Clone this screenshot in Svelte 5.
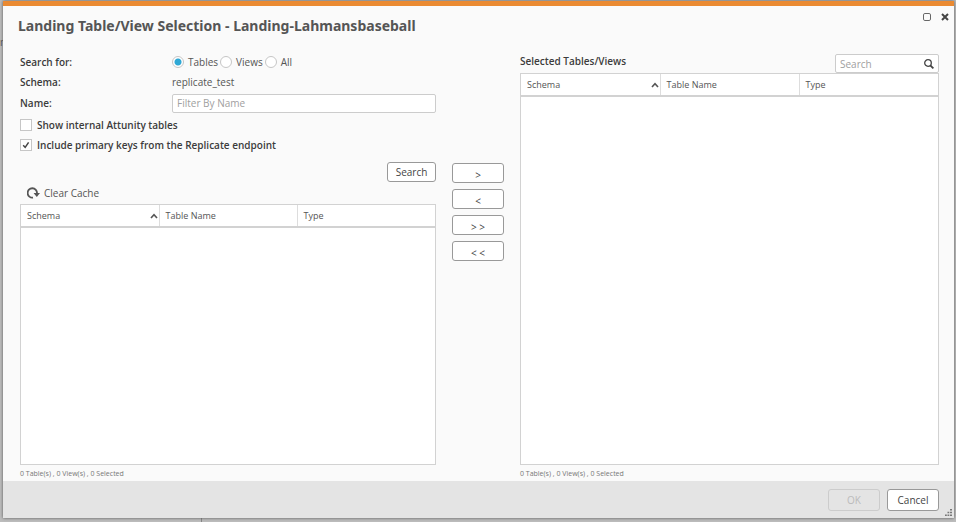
<script>
  let searchFor = $state('Tables');
  let nameFilter = $state('');
  let selectedFilter = $state('');
  let showInternal = $state(false);
  let includeKeys = $state(true);
  const kinds = ['Tables', 'Views', 'All'];
  const moves = [
    { text: '>', label: 'Add' },
    { text: '<', label: 'Remove' },
    { text: '> >', label: 'Add all' },
    { text: '< <', label: 'Remove all' }
  ];
</script>

{#snippet listing(label)}
  <div class="listing">
    <table aria-label={label}>
      <thead>
        <tr>
          <th scope="col" aria-sort="ascending">
            <div class="th">
              Schema
              <svg width="8" height="6" viewBox="0 0 8 6" aria-hidden="true"><path d="M1 5 4 1.6 7 5" fill="none" stroke="#555" stroke-width="1.6" /></svg>
            </div>
          </th>
          <th scope="col"><div class="th">Table Name</div></th>
          <th scope="col"><div class="th">Type</div></th>
        </tr>
      </thead>
      <tbody></tbody>
    </table>
  </div>
  <p class="count">0 Table(s) , 0 View(s) , 0 Selected</p>
{/snippet}

<div class="page">
  <span class="behind" aria-hidden="true">m</span>
  <i class="divider"></i>
  <div class="dialog" role="dialog" aria-labelledby="title">
    <header>
      <h1 id="title">Landing Table/View Selection - Landing-Lahmansbaseball</h1>
      <div class="window">
        <button class="icon" aria-label="Maximize">
          <svg width="8" height="8" viewBox="0 0 8 8"><rect x=".5" y=".5" width="7" height="7" rx="1.4" fill="none" stroke="#666" /></svg>
        </button>
        <button class="icon" aria-label="Close">
          <svg width="8" height="8" viewBox="0 0 8 8"><path d="M1 1 7 7M7 1 1 7" stroke="#444" stroke-width="2" /></svg>
        </button>
      </div>
    </header>

    <main>
      <section class="left">
        <div class="row" role="radiogroup" aria-labelledby="for">
          <span class="name" id="for">Search for:</span>
          <div class="radios">
            {#each kinds as kind}
              <label><input type="radio" name="kind" value={kind} bind:group={searchFor} />{kind}</label>
            {/each}
          </div>
        </div>
        <div class="row"><span class="name">Schema:</span><span>replicate_test</span></div>
        <div class="row filter">
          <label class="name" for="filter">Name:</label>
          <input id="filter" class="text" type="text" placeholder="Filter By Name" bind:value={nameFilter} />
        </div>
        <label class="check"><input type="checkbox" bind:checked={showInternal} />Show internal Attunity tables</label>
        <label class="check">
          <input type="checkbox" bind:checked={includeKeys} />Include primary keys from the Replicate endpoint
        </label>
        <button class="btn search">Search</button>
        <button class="clear">
          <svg width="13" height="12" viewBox="0 0 13 12" aria-hidden="true">
            <path d="M6 10.6A4.7 4.7 0 1 1 10 6.4" fill="none" stroke="#555" stroke-width="1.8" />
            <path d="M6.6 6h6.4L9.8 10z" fill="#555" />
          </svg>
          Clear Cache
        </button>
        {@render listing('Available tables and views')}
      </section>

      <div class="moves">
        {#each moves as move}
          <button class="btn" aria-label={move.label}>{move.text}</button>
        {/each}
      </div>

      <section class="right">
        <div class="top">
          <h2>Selected Tables/Views</h2>
          <div class="find">
            <input type="text" aria-label="Search selected" placeholder="Search" bind:value={selectedFilter} />
            <svg width="10" height="10" viewBox="0 0 10 10" aria-hidden="true">
              <circle cx="4" cy="4" r="3.3" fill="none" stroke="#444" stroke-width="1.3" />
              <path d="M6.3 6.3 9.4 9.4" stroke="#444" stroke-width="1.8" />
            </svg>
          </div>
        </div>
        {@render listing('Selected tables and views')}
      </section>
    </main>

    <footer>
      <button class="btn big" disabled>OK</button>
      <button class="btn big">Cancel</button>
      <svg class="grip" width="7" height="7" viewBox="0 0 7 7" aria-hidden="true">
        <path d="M5 0h2v1.6H5zM5 2.7h2v1.6H5zM5 5.4h2V7H5zM2.5 2.7h1.8v1.6H2.5zM2.5 5.4h1.8V7H2.5zM0 5.4h1.8V7H0z" fill="#777" />
      </svg>
    </footer>
  </div>
</div>

<style>
  :global(body) { margin: 0; }
  .page, .page * { box-sizing: border-box; }
  .page {
    position: relative;
    display: flex;
    min-height: 100vh;
    padding: 1px 2px 4px 3px;
    background: #bdbdbd;
    color: #555;
    font: 10px/16px "Open Sans", "Noto Sans", sans-serif;
  }
  .behind { position: absolute; left: 0; top: 34px; }
  .divider { position: absolute; left: 201px; bottom: 0; width: 1px; height: 4px; background: #888; }
  .dialog {
    position: relative;
    display: flex;
    flex: 1;
    flex-direction: column;
    min-width: 0;
    border-top: 5px solid #ea8a32;
    background: #fafafa;
    box-shadow: 0 0 3px #555;
  }
  h1, h2, p { margin: 0; }
  button, input { color: inherit; font: inherit; }
  button { padding: 0; border: 0; background: none; }
  header {
    display: flex;
    justify-content: space-between;
    padding: 7px 5px 0 15px;
  }
  h1 { font: 700 14px/26px "Noto Sans", "Open Sans", sans-serif; }
  .window { display: flex; gap: 10px; height: 8px; }
  .icon { display: flex; }
  main {
    display: grid;
    flex: 1;
    grid-template-columns: minmax(0, 416fr) 52px minmax(0, 419fr);
    column-gap: 16px;
    padding: 13px 15px 0 17px;
  }
  section { display: flex; flex-direction: column; min-width: 0; }
  .row { display: flex; align-items: center; height: 20px; }
  .filter { height: 22px; }
  .name { width: 152px; }
  .name, .check, h2 { color: #3c3c3c; font-weight: 600; }
  .radios { display: flex; gap: 2px; }
  label { display: flex; align-items: center; }
  .radios label { gap: 4px; }
  input { margin: 0; }
  input[type='radio'], input[type='checkbox'] {
    appearance: none;
    width: 12px;
    height: 12px;
    border: 1px solid #c6c6c6;
    background: #fff;
  }
  input[type='radio'] { border-radius: 50%; }
  input[type='radio']:checked { background: radial-gradient(circle, #2fa8d5 3px, #fff 4px); }
  input[type='checkbox']:checked {
    background: #fff url("data:image/svg+xml,%3Csvg xmlns='http://www.w3.org/2000/svg' viewBox='0 0 10 10'%3E%3Cpath d='M2.2 5.2 4.2 7.4 7.6 2.4' fill='none' stroke='%23444' stroke-width='1.5'/%3E%3C/svg%3E");
  }
  .text, .find { border: 1px solid #ccc; border-radius: 2px; background: #fff; }
  .text { flex: 1; min-width: 0; height: 19px; padding: 0 4px; }
  input::placeholder { color: #a0a0a0; opacity: 1; }
  .check { gap: 5px; height: 20px; }
  .filter + .check { margin-top: 1px; }
  .btn {
    width: 52px;
    height: 20px;
    border: 1px solid #999;
    border-radius: 3px;
    background: #fff;
    color: #444;
  }
  .search { align-self: flex-end; width: 49px; margin-top: 7px; }
  .clear { display: flex; align-items: center; align-self: flex-start; gap: 4px; height: 22px; padding-left: 7px; }
  .listing { flex: 1; border: 1px solid #d2d2d2; background: #fff; }
  table { width: 100%; border-collapse: collapse; table-layout: fixed; }
  th { height: 22px; padding: 0; border-bottom: 2px solid #d2d2d2; font-size: 9px; font-weight: 400; text-align: left; }
  th + th { border-left: 1px solid #ddd; }
  .th { display: flex; align-items: center; justify-content: space-between; padding: 0 1px 0 6px; }
  .count { height: 16px; color: #777; font-size: 7px; line-height: 18px; }
  .moves { display: flex; flex-direction: column; gap: 6px; padding-top: 111px; }
  .moves .btn { padding-top: 4px; line-height: 14px; }
  .top { display: flex; justify-content: space-between; padding-top: 2px; }
  h2 { font-size: 10px; line-height: 14px; }
  .find { display: flex; align-items: center; width: 104px; height: 19px; padding: 0 4px; }
  .find input { flex: 1; min-width: 0; padding: 0; border: 0; background: none; }
  footer {
    display: flex;
    flex: none;
    justify-content: flex-end;
    align-items: center;
    gap: 7px;
    height: 37px;
    padding-right: 15px;
    background: #e4e4e4;
  }
  .big { height: 22px; }
  .big:disabled { border-color: #ccc; background: #e4e4e4; color: #bbb; }
  .grip { position: absolute; right: 2px; bottom: 2px; }
</style>
